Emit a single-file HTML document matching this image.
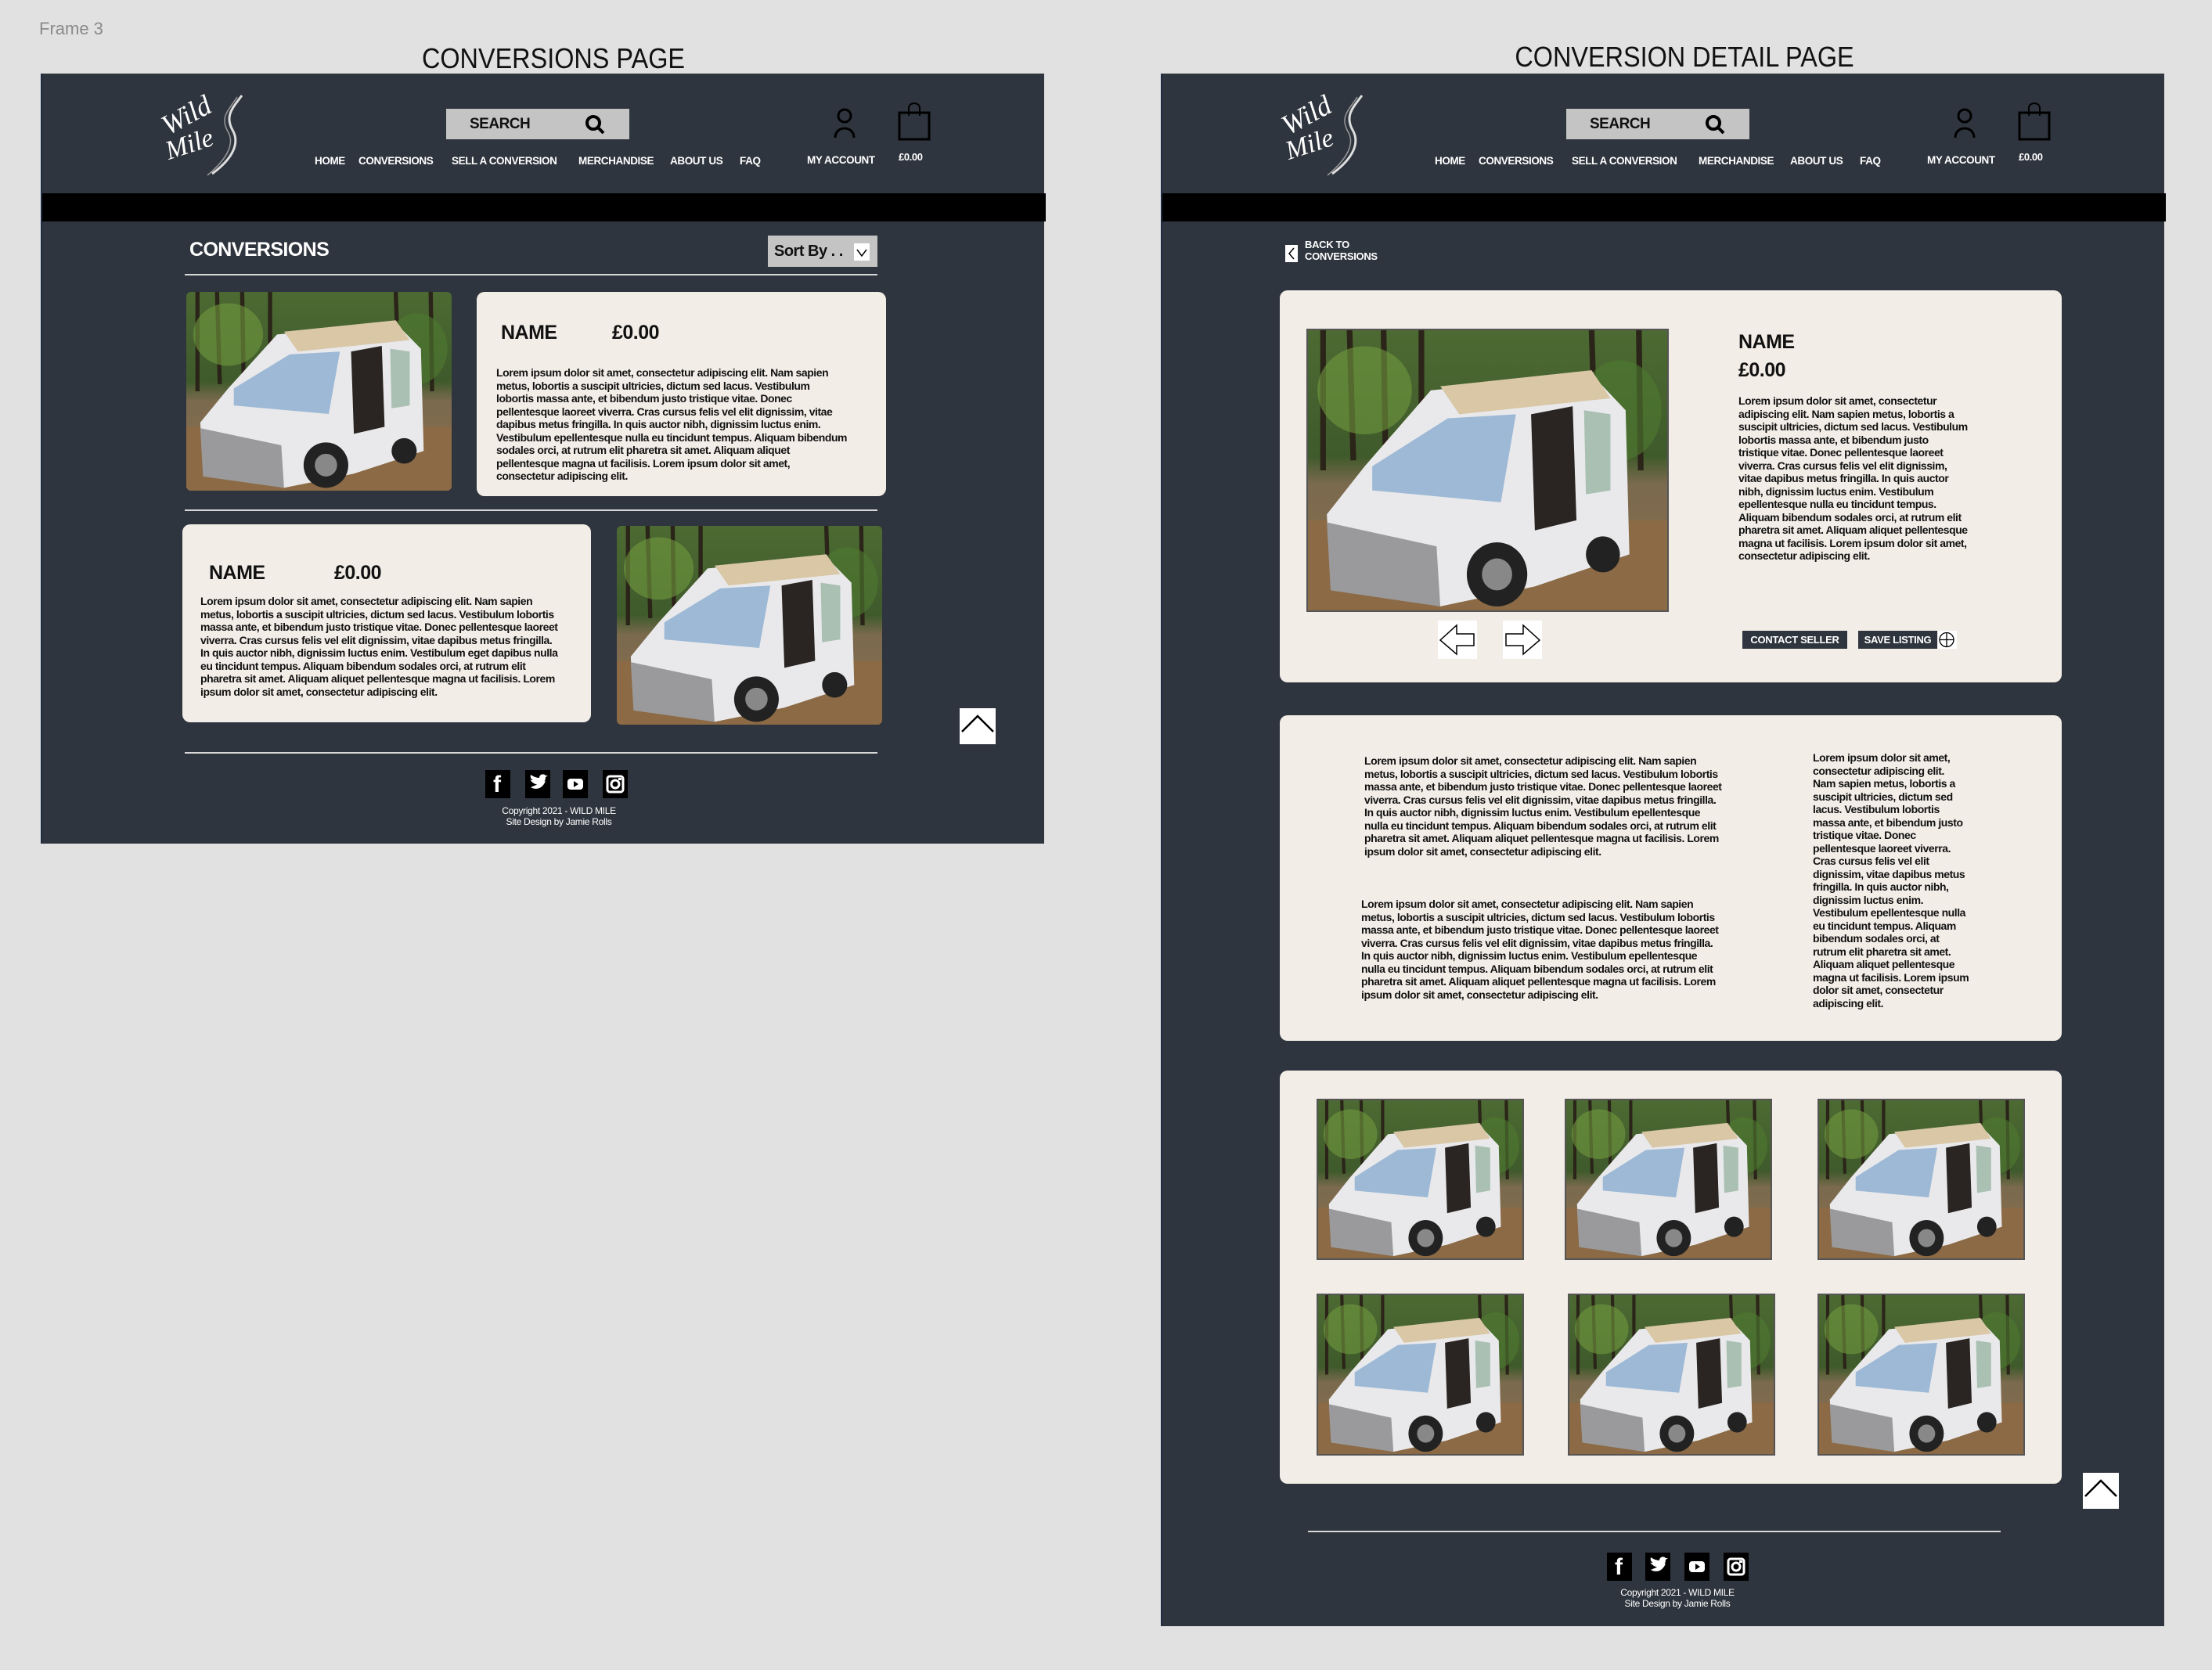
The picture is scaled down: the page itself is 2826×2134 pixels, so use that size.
<!DOCTYPE html>
<html><head><meta charset="utf-8"><style>
*{margin:0;padding:0;box-sizing:border-box}
body{width:2826px;height:2134px;background:#e1e1e1;position:relative;overflow:hidden;font-family:"Liberation Sans Narrow","Liberation Sans",sans-serif}
.a{position:absolute}
.frame{position:absolute;background:#2f353e}
.title{position:absolute;font-family:"Liberation Sans",sans-serif;font-size:36px;color:#111;white-space:nowrap;transform:translateX(-50%) scaleX(0.9)}
.nav{position:absolute;color:#fff;font-weight:bold;font-size:13.5px;letter-spacing:-0.4px;white-space:nowrap}
.search{position:absolute;background:#c4c4c4;width:234px;height:39px}
.search span{position:absolute;left:30px;top:9px;font-weight:bold;font-size:19px;letter-spacing:-0.5px;color:#111}
.bar{position:absolute;background:#000;height:36px}
.card{position:absolute;background:#f3ede7;border-radius:10px}
.nm{position:absolute;font-weight:bold;font-size:25px;letter-spacing:-0.5px;color:#111;white-space:nowrap}
.lorem{position:absolute;font-weight:bold;font-size:14px;line-height:16.5px;letter-spacing:-0.45px;color:#111}
.line{position:absolute;height:2px;background:#d8d8d8}
.img{position:absolute;overflow:hidden}
.img svg{width:100%;height:100%;display:block}
.soc{position:absolute;width:32px;height:36px;background:#000}
.copy{position:absolute;color:#fff;font-size:12px;line-height:14px;letter-spacing:-0.3px;text-align:center;transform:translateX(-50%);white-space:nowrap}
.up{position:absolute;background:#fff}
.btn{position:absolute;background:#2f353e;color:#fff;font-weight:bold;font-size:13px;letter-spacing:-0.3px;line-height:23px;text-align:center;white-space:nowrap}
</style></head><body>
<svg width="0" height="0" style="position:absolute">
<defs>
<linearGradient id="sky" x1="0" y1="0" x2="0" y2="1"><stop offset="0" stop-color="#4d6a33"/><stop offset=".45" stop-color="#3f5a2b"/><stop offset=".55" stop-color="#7b6a4e"/><stop offset="1" stop-color="#8a6d4a"/></linearGradient>
<symbol id="van" viewBox="0 0 190 140" preserveAspectRatio="none">
<rect width="190" height="140" fill="url(#sky)"/>
<g stroke="#2b2418" stroke-width="3"><line x1="8" y1="0" x2="8" y2="70"/><line x1="22" y1="0" x2="24" y2="65"/><line x1="40" y1="0" x2="41" y2="60"/><line x1="60" y1="0" x2="60" y2="40"/><line x1="150" y1="0" x2="152" y2="60"/><line x1="175" y1="0" x2="176" y2="70"/></g>
<ellipse cx="30" cy="30" rx="25" ry="22" fill="#6f9a3d" opacity=".6"/>
<ellipse cx="165" cy="40" rx="22" ry="25" fill="#4f7a30" opacity=".6"/>
<rect x="0" y="95" width="190" height="45" fill="#8b6a45"/>
<path d="M65 30 L150 22 L168 40 L170 112 L120 128 L70 138 L12 128 L10 92 L30 68 Z" fill="#e9e9eb"/>
<path d="M70 28 L150 20 L160 34 L80 42 Z" fill="#d9c7a6"/>
<path d="M34 68 L74 44 L110 42 L102 86 L34 80 Z" fill="#9db9d6"/>
<path d="M118 42 L140 38 L142 95 L120 100 Z" fill="#2a2522"/>
<path d="M146 40 L160 42 L160 80 L147 82 Z" fill="#a9c0b2"/>
<path d="M10 96 L68 108 L70 138 L12 130 Z" fill="#9a9a9c"/>
<circle cx="100" cy="122" r="16" fill="#222"/><circle cx="100" cy="122" r="8" fill="#888"/>
<circle cx="156" cy="112" r="9" fill="#222"/>
</symbol>
</defs></svg>

<div class="a" style="left:50px;top:24px;font-size:22px;color:#8a8a8a;font-family:'Liberation Sans',sans-serif">Frame 3</div>
<div class="title" style="left:707px;top:54px">CONVERSIONS PAGE</div>
<div class="title" style="left:2152px;top:52px">CONVERSION DETAIL PAGE</div>

<!-- LEFT FRAME -->
<div class="frame" style="left:52px;top:94px;width:1282px;height:984px;border-left:2px solid #1d2a44">
  <div class="a" style="left:143px;top:14px;width:120px;height:117px">
    <div class="a" style="left:8px;top:18px;color:#fff;font-family:'Liberation Serif',serif;font-style:italic;font-size:36px;transform:rotate(-28deg);">Wild</div>
    <div class="a" style="left:14px;top:58px;color:#fff;font-family:'Liberation Serif',serif;font-style:italic;font-size:34px;transform:rotate(-18deg);">Mile</div>
    <svg class="a" style="left:60px;top:10px" width="60" height="110"><path d="M52 4 C40 20 30 30 40 48 C50 65 40 85 14 104" stroke="#ddd" stroke-width="3" fill="none"/><path d="M46 6 C34 24 24 32 34 50 C44 66 32 86 8 106" stroke="#999" stroke-width="1.5" fill="none"/></svg>
  </div>
  <div class="search" style="left:516px;top:45px"><span>SEARCH</span>
    <svg class="a" style="left:176px;top:6px" width="28" height="28"><circle cx="12" cy="12" r="8" stroke="#000" stroke-width="4" fill="none"/><line x1="18" y1="18" x2="25" y2="25" stroke="#000" stroke-width="4"/></svg></div>
  <div class="nav" style="left:348px;top:104px">HOME</div>
  <div class="nav" style="left:404px;top:104px">CONVERSIONS</div>
  <div class="nav" style="left:523px;top:104px">SELL A CONVERSION</div>
  <div class="nav" style="left:685px;top:104px">MERCHANDISE</div>
  <div class="nav" style="left:802px;top:104px">ABOUT US</div>
  <div class="nav" style="left:891px;top:104px">FAQ</div>
  <div class="nav" style="left:977px;top:103px">MY ACCOUNT</div>
  <div class="nav" style="left:1094px;top:99px;font-size:13px">£0.00</div>
  <svg class="a" style="left:1010px;top:44px" width="30" height="40"><circle cx="15" cy="10" r="8" stroke="#000" stroke-width="3" fill="none"/><path d="M3 38 C3 22 27 22 27 38" stroke="#000" stroke-width="3" fill="none"/></svg>
  <svg class="a" style="left:1093px;top:36px" width="42" height="50"><rect x="2" y="14" width="38" height="34" stroke="#000" stroke-width="3" fill="none"/><path d="M14 18 V8 C14 0 28 0 28 8 V18" stroke="#000" stroke-width="2" fill="none"/></svg>
  <div class="bar" style="left:0;top:153px;width:1282px"></div>
  <div class="a" style="left:188px;top:211px;color:#fff;font-weight:bold;font-size:25px;letter-spacing:-0.6px">CONVERSIONS</div>
  <div class="a" style="left:927px;top:207px;width:140px;height:40px;background:#c4c4c4">
    <div class="a" style="left:8px;top:9px;font-weight:bold;font-size:20px;letter-spacing:-0.5px;color:#111">Sort By . .</div>
    <div class="a" style="left:110px;top:10px;width:20px;height:22px;background:#fff"><svg width="20" height="22"><path d="M4 8 L10 16 L16 8" stroke="#000" stroke-width="1.5" fill="none"/></svg></div>
  </div>
  <div class="line" style="left:182px;top:256px;width:885px"></div>
  <div class="img" style="left:184px;top:279px;width:339px;height:254px;border-radius:6px"><svg><use href="#van"/></svg></div>
  <div class="card" style="left:555px;top:279px;width:523px;height:261px"></div>
  <div class="nm" style="left:586px;top:317px">NAME</div>
  <div class="nm" style="left:728px;top:317px">£0.00</div>
  <div class="lorem" style="left:580px;top:374px;width:450px">Lorem ipsum dolor sit amet, consectetur adipiscing elit. Nam sapien metus, lobortis a suscipit ultricies, dictum sed lacus. Vestibulum lobortis massa ante, et bibendum justo tristique vitae. Donec pellentesque laoreet viverra. Cras cursus felis vel elit dignissim, vitae dapibus metus fringilla. In quis auctor nibh, dignissim luctus enim. Vestibulum epellentesque nulla eu tincidunt tempus. Aliquam bibendum sodales orci, at rutrum elit pharetra sit amet. Aliquam aliquet pellentesque magna ut facilisis. Lorem ipsum dolor sit amet, consectetur adipiscing elit.</div>
  <div class="line" style="left:182px;top:557px;width:885px"></div>
  <div class="card" style="left:179px;top:576px;width:522px;height:253px"></div>
  <div class="nm" style="left:213px;top:624px">NAME</div>
  <div class="nm" style="left:373px;top:624px">£0.00</div>
  <div class="lorem" style="left:202px;top:666px;width:460px">Lorem ipsum dolor sit amet, consectetur adipiscing elit. Nam sapien metus, lobortis a suscipit ultricies, dictum sed lacus. Vestibulum lobortis massa ante, et bibendum justo tristique vitae. Donec pellentesque laoreet viverra. Cras cursus felis vel elit dignissim, vitae dapibus metus fringilla. In quis auctor nibh, dignissim luctus enim. Vestibulum eget dapibus nulla eu tincidunt tempus. Aliquam bibendum sodales orci, at rutrum elit pharetra sit amet. Aliquam aliquet pellentesque magna ut facilisis. Lorem ipsum dolor sit amet, consectetur adipiscing elit.</div>
  <div class="img" style="left:734px;top:578px;width:339px;height:254px;border-radius:6px"><svg><use href="#van"/></svg></div>
  <div class="up" style="left:1172px;top:811px;width:46px;height:46px"><svg width="46" height="46"><path d="M3 30 L23 10 L43 30" stroke="#000" stroke-width="2.5" fill="none"/></svg></div>
  <div class="line" style="left:182px;top:867px;width:885px"></div>
  <div class="soc" style="left:566px;top:890px"><div class="a" style="left:10px;top:2px;color:#fff;font-weight:bold;font-size:30px;font-family:'Liberation Sans',sans-serif">f</div></div>
  <div class="soc" style="left:617px;top:890px"><svg width="32" height="36"><path d="M6 12 C10 18 16 20 22 18 C26 14 26 10 26 9 L29 7 L26 7 C24 4 18 5 18 10 C14 10 10 8 7 6 C6 10 8 12 10 13 C8 13 7 13 6 12 Z M7 22 C14 26 22 24 26 14" fill="#fff"/></svg></div>
  <div class="soc" style="left:665px;top:890px"><svg width="32" height="36"><rect x="6" y="11" width="20" height="14" rx="4" fill="#fff"/><path d="M14 14 L20 18 L14 22 Z" fill="#000"/></svg></div>
  <div class="soc" style="left:716px;top:890px"><svg width="32" height="36"><rect x="6" y="8" width="20" height="20" rx="3" stroke="#fff" stroke-width="3" fill="none"/><circle cx="16" cy="18" r="5" stroke="#fff" stroke-width="3" fill="none"/><rect x="20" y="10" width="4" height="3" fill="#fff"/></svg></div>
  <div class="copy" style="left:660px;top:935px">Copyright 2021 - WILD MILE<br>Site Design by Jamie Rolls</div>
</div>

<!-- RIGHT FRAME -->
<div class="frame" style="left:1483px;top:94px;width:1282px;height:1984px;border-left:2px solid #1d2a44">
  <div class="a" style="left:143px;top:14px;width:120px;height:117px">
    <div class="a" style="left:8px;top:18px;color:#fff;font-family:'Liberation Serif',serif;font-style:italic;font-size:36px;transform:rotate(-28deg);">Wild</div>
    <div class="a" style="left:14px;top:58px;color:#fff;font-family:'Liberation Serif',serif;font-style:italic;font-size:34px;transform:rotate(-18deg);">Mile</div>
    <svg class="a" style="left:60px;top:10px" width="60" height="110"><path d="M52 4 C40 20 30 30 40 48 C50 65 40 85 14 104" stroke="#ddd" stroke-width="3" fill="none"/><path d="M46 6 C34 24 24 32 34 50 C44 66 32 86 8 106" stroke="#999" stroke-width="1.5" fill="none"/></svg>
  </div>
  <div class="search" style="left:516px;top:45px"><span>SEARCH</span>
    <svg class="a" style="left:176px;top:6px" width="28" height="28"><circle cx="12" cy="12" r="8" stroke="#000" stroke-width="4" fill="none"/><line x1="18" y1="18" x2="25" y2="25" stroke="#000" stroke-width="4"/></svg></div>
  <div class="nav" style="left:348px;top:104px">HOME</div>
  <div class="nav" style="left:404px;top:104px">CONVERSIONS</div>
  <div class="nav" style="left:523px;top:104px">SELL A CONVERSION</div>
  <div class="nav" style="left:685px;top:104px">MERCHANDISE</div>
  <div class="nav" style="left:802px;top:104px">ABOUT US</div>
  <div class="nav" style="left:891px;top:104px">FAQ</div>
  <div class="nav" style="left:977px;top:103px">MY ACCOUNT</div>
  <div class="nav" style="left:1094px;top:99px;font-size:13px">£0.00</div>
  <svg class="a" style="left:1010px;top:44px" width="30" height="40"><circle cx="15" cy="10" r="8" stroke="#000" stroke-width="3" fill="none"/><path d="M3 38 C3 22 27 22 27 38" stroke="#000" stroke-width="3" fill="none"/></svg>
  <svg class="a" style="left:1093px;top:36px" width="42" height="50"><rect x="2" y="14" width="38" height="34" stroke="#000" stroke-width="3" fill="none"/><path d="M14 18 V8 C14 0 28 0 28 8 V18" stroke="#000" stroke-width="2" fill="none"/></svg>
  <div class="bar" style="left:0;top:153px;width:1282px"></div>

  <div class="a" style="left:157px;top:219px;width:16px;height:22px;background:#fff"><svg width="16" height="22"><path d="M11 4 L5 11 L11 18" stroke="#000" stroke-width="1.5" fill="none"/></svg></div>
  <div class="a" style="left:182px;top:211px;color:#fff;font-weight:bold;font-size:13px;letter-spacing:-0.3px;line-height:15px">BACK TO<br>CONVERSIONS</div>

  <div class="card" style="left:150px;top:277px;width:999px;height:501px"></div>
  <div class="img" style="left:184px;top:326px;width:463px;height:362px;border:2px solid #555"><svg><use href="#van"/></svg></div>
  <div class="a" style="left:352px;top:699px;width:50px;height:49px;background:#fff"><svg width="50" height="49"><path d="M46 17 H24 V6 L3 25 L24 43 V32 H46 Z" stroke="#000" stroke-width="1.5" fill="none"/></svg></div>
  <div class="a" style="left:435px;top:699px;width:50px;height:49px;background:#fff"><svg width="50" height="49"><path d="M4 17 H26 V6 L47 25 L26 43 V32 H4 Z" stroke="#000" stroke-width="1.5" fill="none"/></svg></div>
  <div class="nm" style="left:736px;top:329px">NAME</div>
  <div class="nm" style="left:736px;top:365px">£0.00</div>
  <div class="lorem" style="left:736px;top:410px;width:295px">Lorem ipsum dolor sit amet, consectetur adipiscing elit. Nam sapien metus, lobortis a suscipit ultricies, dictum sed lacus. Vestibulum lobortis massa ante, et bibendum justo tristique vitae. Donec pellentesque laoreet viverra. Cras cursus felis vel elit dignissim, vitae dapibus metus fringilla. In quis auctor nibh, dignissim luctus enim. Vestibulum epellentesque nulla eu tincidunt tempus. Aliquam bibendum sodales orci, at rutrum elit pharetra sit amet. Aliquam aliquet pellentesque magna ut facilisis. Lorem ipsum dolor sit amet, consectetur adipiscing elit.</div>
  <div class="btn" style="left:741px;top:712px;width:134px">CONTACT SELLER</div>
  <div class="btn" style="left:889px;top:712px;width:101px">SAVE LISTING</div>
  <div class="a" style="left:991px;top:712px;width:24px;height:23px;background:#fff"><svg width="24" height="23"><circle cx="11" cy="11.5" r="9" stroke="#000" stroke-width="1.3" fill="none"/><path d="M11 3 V20 M2 11.5 H20" stroke="#000" stroke-width="1.3"/></svg></div>

  <div class="card" style="left:150px;top:820px;width:999px;height:416px"></div>
  <div class="lorem" style="left:258px;top:870px;width:460px">Lorem ipsum dolor sit amet, consectetur adipiscing elit. Nam sapien metus, lobortis a suscipit ultricies, dictum sed lacus. Vestibulum lobortis massa ante, et bibendum justo tristique vitae. Donec pellentesque laoreet viverra. Cras cursus felis vel elit dignissim, vitae dapibus metus fringilla. In quis auctor nibh, dignissim luctus enim. Vestibulum epellentesque nulla eu tincidunt tempus. Aliquam bibendum sodales orci, at rutrum elit pharetra sit amet. Aliquam aliquet pellentesque magna ut facilisis. Lorem ipsum dolor sit amet, consectetur adipiscing elit.</div>
  <div class="lorem" style="left:254px;top:1053px;width:460px">Lorem ipsum dolor sit amet, consectetur adipiscing elit. Nam sapien metus, lobortis a suscipit ultricies, dictum sed lacus. Vestibulum lobortis massa ante, et bibendum justo tristique vitae. Donec pellentesque laoreet viverra. Cras cursus felis vel elit dignissim, vitae dapibus metus fringilla. In quis auctor nibh, dignissim luctus enim. Vestibulum epellentesque nulla eu tincidunt tempus. Aliquam bibendum sodales orci, at rutrum elit pharetra sit amet. Aliquam aliquet pellentesque magna ut facilisis. Lorem ipsum dolor sit amet, consectetur adipiscing elit.</div>
  <div class="lorem" style="left:831px;top:866px;width:200px">Lorem ipsum dolor sit amet, consectetur adipiscing elit. Nam sapien metus, lobortis a suscipit ultricies, dictum sed lacus. Vestibulum lobortis massa ante, et bibendum justo tristique vitae. Donec pellentesque laoreet viverra. Cras cursus felis vel elit dignissim, vitae dapibus metus fringilla. In quis auctor nibh, dignissim luctus enim. Vestibulum epellentesque nulla eu tincidunt tempus. Aliquam bibendum sodales orci, at rutrum elit pharetra sit amet. Aliquam aliquet pellentesque magna ut facilisis. Lorem ipsum dolor sit amet, consectetur adipiscing elit.</div>

  <div class="card" style="left:150px;top:1274px;width:999px;height:528px"></div>
  <div class="img" style="left:197px;top:1310px;width:265px;height:206px;border:2px solid #555"><svg><use href="#van"/></svg></div>
  <div class="img" style="left:514px;top:1310px;width:265px;height:206px;border:2px solid #555"><svg><use href="#van"/></svg></div>
  <div class="img" style="left:837px;top:1310px;width:265px;height:206px;border:2px solid #555"><svg><use href="#van"/></svg></div>
  <div class="img" style="left:197px;top:1559px;width:265px;height:207px;border:2px solid #555"><svg><use href="#van"/></svg></div>
  <div class="img" style="left:518px;top:1559px;width:265px;height:207px;border:2px solid #555"><svg><use href="#van"/></svg></div>
  <div class="img" style="left:837px;top:1559px;width:265px;height:207px;border:2px solid #555"><svg><use href="#van"/></svg></div>

  <div class="up" style="left:1176px;top:1788px;width:46px;height:46px"><svg width="46" height="46"><path d="M3 30 L23 10 L43 30" stroke="#000" stroke-width="2.5" fill="none"/></svg></div>
  <div class="line" style="left:186px;top:1862px;width:885px"></div>
  <div class="soc" style="left:568px;top:1890px"><div class="a" style="left:10px;top:2px;color:#fff;font-weight:bold;font-size:30px;font-family:'Liberation Sans',sans-serif">f</div></div>
  <div class="soc" style="left:617px;top:1890px"><svg width="32" height="36"><path d="M6 12 C10 18 16 20 22 18 C26 14 26 10 26 9 L29 7 L26 7 C24 4 18 5 18 10 C14 10 10 8 7 6 C6 10 8 12 10 13 C8 13 7 13 6 12 Z M7 22 C14 26 22 24 26 14" fill="#fff"/></svg></div>
  <div class="soc" style="left:667px;top:1890px"><svg width="32" height="36"><rect x="6" y="11" width="20" height="14" rx="4" fill="#fff"/><path d="M14 14 L20 18 L14 22 Z" fill="#000"/></svg></div>
  <div class="soc" style="left:717px;top:1890px"><svg width="32" height="36"><rect x="6" y="8" width="20" height="20" rx="3" stroke="#fff" stroke-width="3" fill="none"/><circle cx="16" cy="18" r="5" stroke="#fff" stroke-width="3" fill="none"/><rect x="20" y="10" width="4" height="3" fill="#fff"/></svg></div>
  <div class="copy" style="left:658px;top:1934px">Copyright 2021 - WILD MILE<br>Site Design by Jamie Rolls</div>
</div>
</body></html>
